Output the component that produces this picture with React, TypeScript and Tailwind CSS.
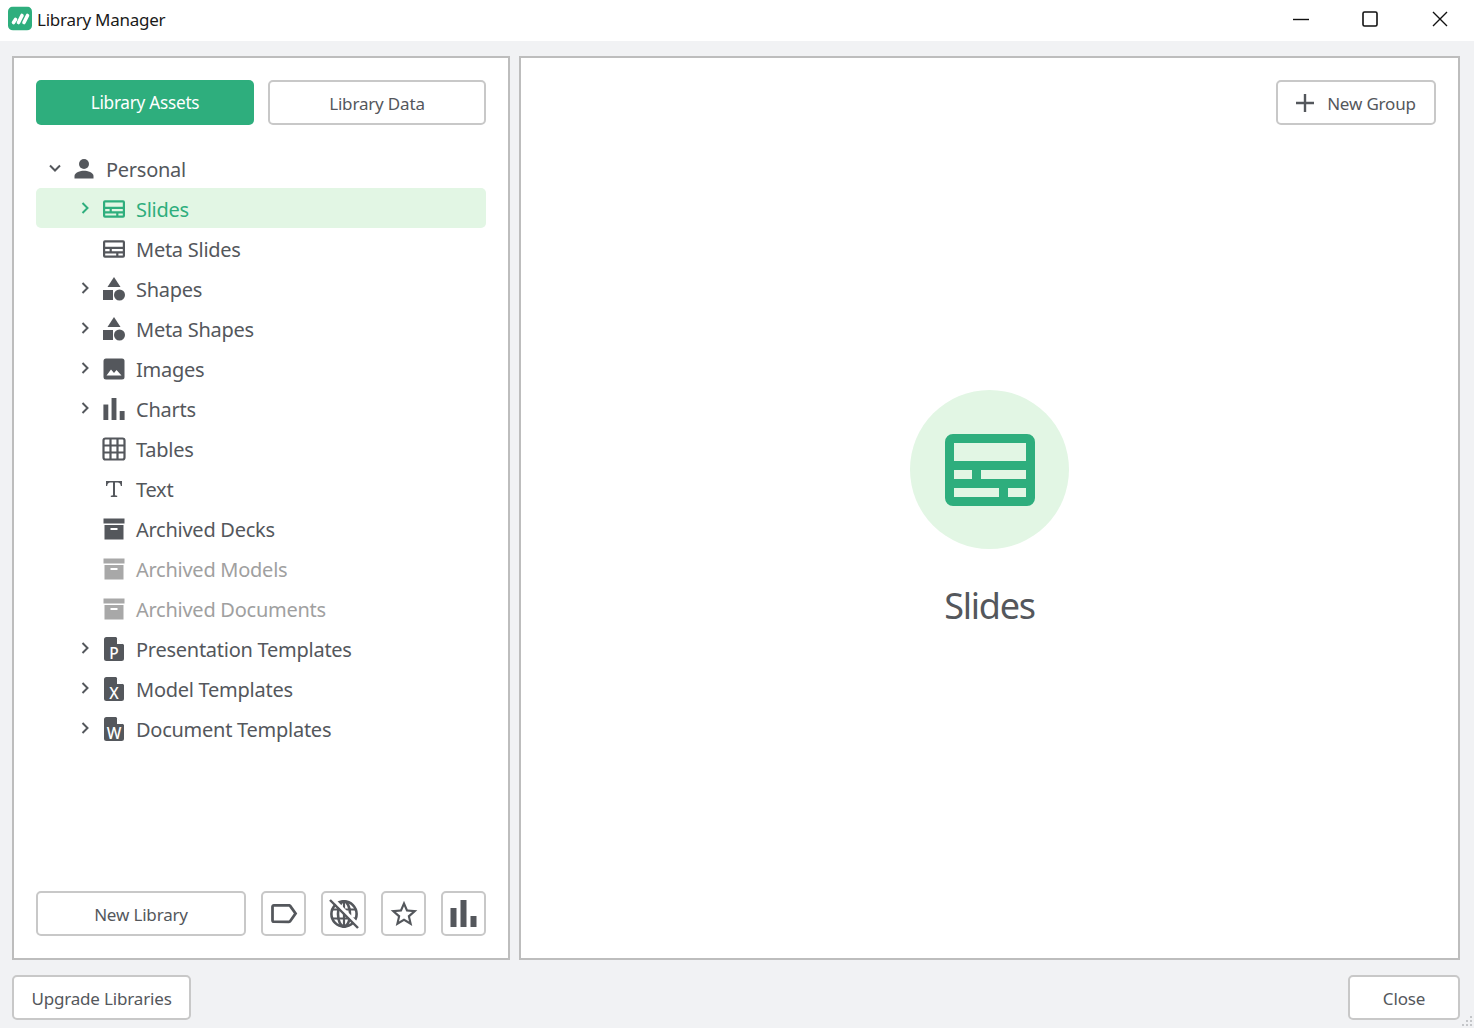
import React from "react";

const D = "#54575c";
const G = "#2eae7d";

function Chevron({ open, color = D }: { open?: boolean; color?: string }) {
  return (
    <svg width="14" height="14" viewBox="0 0 14 14" fill="none" stroke={color} strokeWidth="2">
      {open ? <path d="M2 4.5 7 9.5 12 4.5" /> : <path d="M4.5 2 9.5 7 4.5 12" />}
    </svg>
  );
}

function SlidesIcon({ color = D, w = 22, h = 18 }: { color?: string; w?: number; h?: number }) {
  return (
    <svg width={w} height={h} viewBox="0 0 90 72">
      <path
        fillRule="evenodd"
        fill={color}
        d="M8 0H82A8 8 0 0 1 90 8V64A8 8 0 0 1 82 72H8A8 8 0 0 1 0 64V8A8 8 0 0 1 8 0ZM9 9V27H81V9ZM9 36V45H27V36ZM36 36V45H81V36ZM9 54V63H54V54ZM63 54V63H81V54Z"
      />
    </svg>
  );
}

function ShapesIcon() {
  return (
    <svg width="22" height="24" viewBox="0 0 22 24" fill={D}>
      <path d="M11 0 17.5 10H4.5Z" />
      <rect x="0" y="13" width="10" height="10" />
      <circle cx="16.5" cy="18" r="5.5" />
    </svg>
  );
}

function ImageIcon() {
  return (
    <svg width="22" height="22" viewBox="0 0 22 22">
      <rect x="0.5" y="0.5" width="21" height="21" rx="2.5" fill={D} />
      <path d="M3.5 17.5 8 11.5 11 15 13.5 12 18.5 17.5Z" fill="#fff" />
    </svg>
  );
}

function ChartIcon({ s = 22 }: { s?: number }) {
  return (
    <svg width={s} height={s} viewBox="0 0 26 27" fill={D}>
      <rect x="0" y="8" width="6" height="19" />
      <rect x="10" y="0" width="6" height="27" />
      <rect x="20" y="16" width="6" height="11" />
    </svg>
  );
}

function TableIcon() {
  return (
    <svg width="24" height="24" viewBox="0 0 24 24" fill="none" stroke={D} strokeWidth="2.2">
      <rect x="1.5" y="1.5" width="21" height="21" rx="2" />
      <path d="M8.5 2V22M15.5 2V22M2 8.5H22M2 15.5H22" />
    </svg>
  );
}

function TextIcon() {
  return (
    <svg width="18" height="18" viewBox="0 0 18 18" fill={D}>
      <path d="M1 1H17V6H15.8C15.6 3.6 14.8 2.4 12.6 2.4H10V15.2L12.2 15.8V17H5.8V15.8L8 15.2V2.4H5.4C3.2 2.4 2.4 3.6 2.2 6H1Z" />
    </svg>
  );
}

function ArchiveIcon({ color = D }: { color?: string }) {
  return (
    <svg width="22" height="22" viewBox="0 0 22 22">
      <rect x="0.5" y="0.5" width="21" height="5" fill={color} />
      <path fillRule="evenodd" fill={color} d="M1.5 7H20.5V21.5H1.5ZM7.5 10V12H14.5V10Z" />
    </svg>
  );
}

function FileIcon({ letter }: { letter: string }) {
  return (
    <span className="relative flex h-6 w-5">
      <svg width="20" height="24" viewBox="0 0 20 24">
        <path d="M2.5 0H12L20 8V21.5A2.5 2.5 0 0 1 17.5 24H2.5A2.5 2.5 0 0 1 0 21.5V2.5A2.5 2.5 0 0 1 2.5 0Z" fill={D} />
        <path d="M13 0.5 19.5 7H13Z" fill="#fff" />
      </svg>
      <span className="absolute inset-x-0 bottom-0 text-center text-[15.5px] font-medium leading-[16px] tracking-normal text-white">
        {letter}
      </span>
    </span>
  );
}

function PersonIcon() {
  return (
    <svg width="22" height="22" viewBox="0 0 22 22" fill={D}>
      <circle cx="11" cy="6" r="5" />
      <path d="M1.5 20.5V18C1.5 14.5 7.5 12.7 11 12.7S20.5 14.5 20.5 18V20.5Z" />
    </svg>
  );
}

function GlobeOff() {
  return (
    <svg width="32" height="32" viewBox="0 0 32 32">
      <g stroke={D} strokeWidth="2.6" fill="none">
        <circle cx="16" cy="16" r="12.6" />
        <ellipse cx="16" cy="16" rx="6" ry="12.6" />
        <path d="M4 11.5H28M4 20.5H28M16 3.5V28.5" strokeWidth="2.2" />
      </g>
      <path d="M4.5 0.5 31.5 28.5" stroke="#fff" strokeWidth="3.4" />
      <path d="M2 2 30 30" stroke={D} strokeWidth="2.4" />
    </svg>
  );
}

function Btn({ className, children }: { className: string; children: React.ReactNode }) {
  return (
    <button
      className={
        "flex h-[45px] items-center justify-center rounded-[5px] border-2 border-[#c8c8c8] bg-white pt-[2px] text-[17px] tracking-[-0.01em] text-[#54575c] " +
        className
      }
    >
      {children}
    </button>
  );
}

type Row = { label: string; icon: React.ReactNode; chev?: boolean; muted?: boolean };

const rows: Row[] = [
  { label: "Meta Slides", icon: <SlidesIcon /> },
  { label: "Shapes", icon: <ShapesIcon />, chev: true },
  { label: "Meta Shapes", icon: <ShapesIcon />, chev: true },
  { label: "Images", icon: <ImageIcon />, chev: true },
  { label: "Charts", icon: <ChartIcon />, chev: true },
  { label: "Tables", icon: <TableIcon /> },
  { label: "Text", icon: <TextIcon /> },
  { label: "Archived Decks", icon: <ArchiveIcon /> },
  { label: "Archived Models", icon: <ArchiveIcon color="#a8a8a8" />, muted: true },
  { label: "Archived Documents", icon: <ArchiveIcon color="#a8a8a8" />, muted: true },
  { label: "Presentation Templates", icon: <FileIcon letter="P" />, chev: true },
  { label: "Model Templates", icon: <FileIcon letter="X" />, chev: true },
  { label: "Document Templates", icon: <FileIcon letter="W" />, chev: true },
];

function TreeRow({ r }: { r: Row }) {
  return (
    <div className={"flex h-10 items-center pl-[42px] " + (r.muted ? "text-[#a0a0a0]" : "text-[#54575c]")}>
      <span className="flex w-[14px] justify-center">{r.chev && <Chevron />}</span>
      <span className="ml-[10px] flex w-[24px] translate-y-[1px] justify-center">{r.icon}</span>
      <span className="ml-[10px] translate-y-[2px]">{r.label}</span>
    </div>
  );
}

export default function App() {
  return (
    <div
      className="relative flex h-[1028px] w-[1474px] flex-col overflow-hidden bg-[#f1f2f4]"
      style={{ fontFamily: "'Noto Sans', 'Open Sans', sans-serif" }}
    >
      <header className="flex h-[41px] items-center justify-between bg-white pb-[2px] pl-2">
        <div className="flex items-center gap-[5px]">
          <svg width="24" height="24" viewBox="0 0 24 24" className="-translate-y-[1.5px]">
            <rect width="24" height="24" rx="5" fill={G} />
            <g stroke="#fff" strokeWidth="3.6" strokeLinecap="round" fill="none">
              <path d="M5.5 16 7.5 13" />
              <path d="M10.5 16 14 9" />
              <path d="M16 16 19.5 9" />
            </g>
          </svg>
          <span className="text-[17px] tracking-[-0.015em] text-[#1a1a1a]">Library Manager</span>
        </div>
        <div className="flex items-center pb-[2px] pr-[26px]">
          <svg width="16" height="16" viewBox="0 0 16 16" stroke="#111" fill="none" strokeWidth="1.4">
            <path d="M0 8.5H16" />
          </svg>
          <svg width="16" height="16" viewBox="0 0 16 16" stroke="#111" fill="none" strokeWidth="1.6" className="ml-[53px]">
            <rect x="1" y="1" width="14" height="14" rx="1.5" />
          </svg>
          <svg width="16" height="16" viewBox="0 0 16 16" stroke="#111" fill="none" strokeWidth="1.4" className="ml-[54px]">
            <path d="M1 1 15 15M15 1 1 15" />
          </svg>
        </div>
      </header>

      <main className="flex flex-1 gap-[9px] pl-3 pr-[14px] pt-[15px]">
        <section className="flex w-[498px] flex-col border-2 border-[#bdbdbd] bg-white px-[22px] pt-[22px]">
          <div className="flex justify-between">
            <div className="flex h-[45px] w-[218px] items-center justify-center rounded-[5px] bg-[#2eae7d] text-[17.2px] tracking-[-0.015em] text-white">
              Library Assets
            </div>
            <Btn className="w-[218px]">Library Data</Btn>
          </div>

          <div className="mt-[24px] flex-1 text-[20px] tracking-[-0.013em]">
            <div className="flex h-[39px] items-center pl-[12px] text-[#54575c]">
              <span className="flex w-[14px] -translate-y-[1px] justify-center">
                <Chevron open />
              </span>
              <span className="ml-[10px] flex w-[24px] justify-center">
                <PersonIcon />
              </span>
              <span className="ml-[10px] translate-y-[1px]">Personal</span>
            </div>
            <div className="flex h-10 items-center rounded-[5px] bg-[#e2f6e4] pl-[42px] text-[#2eae7d]">
              <span className="flex w-[14px] justify-center">
                <Chevron color={G} />
              </span>
              <span className="ml-[10px] flex w-[24px] translate-y-[1px] justify-center">
                <SlidesIcon color={G} />
              </span>
              <span className="ml-[10px] translate-y-[2px]">Slides</span>
            </div>
            {rows.map((r) => (
              <TreeRow key={r.label} r={r} />
            ))}
          </div>

          <div className="mb-[22px] flex items-center justify-between">
            <Btn className="w-[210px]">New Library</Btn>
            <div className="flex gap-[15px]">
              <Btn className="w-[45px] !pt-0">
                <svg width="33" height="33" viewBox="0 0 24 24" fill={D}>
                  <path d="M17.63 5.84C17.27 5.33 16.67 5 16 5L5 5.01C3.9 5.01 3 5.9 3 7v10c0 1.1.9 1.99 2 1.99L16 19c.67 0 1.27-.33 1.63-.84L22 12l-4.37-6.16zM16 17H5V7h11l3.55 5L16 17z" />
                </svg>
              </Btn>
              <Btn className="w-[45px] !pt-0">
                <GlobeOff />
              </Btn>
              <Btn className="w-[45px] !pt-0">
                <svg width="32" height="32" viewBox="0 0 24 24" fill={D}>
                  <path d="M22 9.24l-7.19-.62L12 2 9.19 8.63 2 9.24l5.46 4.73L5.82 21 12 17.27 18.18 21l-1.63-7.03L22 9.24zM12 15.4l-3.76 2.27 1-4.28-3.32-2.88 4.38-.38L12 6.1l1.71 4.04 4.38.38-3.32 2.88 1 4.28L12 15.4z" />
                </svg>
              </Btn>
              <Btn className="w-[45px] !pt-0">
                <ChartIcon s={27} />
              </Btn>
            </div>
          </div>
        </section>

        <section className="flex flex-1 flex-col border-2 border-[#bdbdbd] bg-white px-[22px] pt-[22px]">
          <div className="flex justify-end">
            <Btn className="w-[160px] gap-[11px]">
              <svg width="20" height="20" viewBox="0 0 20 20" stroke={D} strokeWidth="2.4" className="-translate-x-[1px] -translate-y-[1px]">
                <path d="M10 1V19M1 10H19" />
              </svg>
              New Group
            </Btn>
          </div>
          <div className="mt-[265px] flex flex-col items-center">
            <div className="flex h-[159px] w-[159px] items-center justify-center rounded-full bg-[#e2f6e4]">
              <SlidesIcon color={G} w={90} h={72} />
            </div>
            <div className="mt-[33px] text-[36px] leading-[48px] tracking-[-0.035em] text-[#54575c]">Slides</div>
          </div>
        </section>
      </main>

      <footer className="flex items-center justify-between pb-[8px] pl-3 pr-[14px] pt-[15px]">
        <Btn className="w-[179px]">Upgrade Libraries</Btn>
        <Btn className="w-[112px]">Close</Btn>
      </footer>

      <svg width="12" height="12" viewBox="0 0 12 12" fill="#c4c6c9" className="absolute bottom-[1px] right-[1px]">
        <rect x="9" y="1" width="2" height="2" />
        <rect x="5" y="5" width="2" height="2" />
        <rect x="9" y="5" width="2" height="2" />
        <rect x="1" y="9" width="2" height="2" />
        <rect x="5" y="9" width="2" height="2" />
        <rect x="9" y="9" width="2" height="2" />
      </svg>
    </div>
  );
}
